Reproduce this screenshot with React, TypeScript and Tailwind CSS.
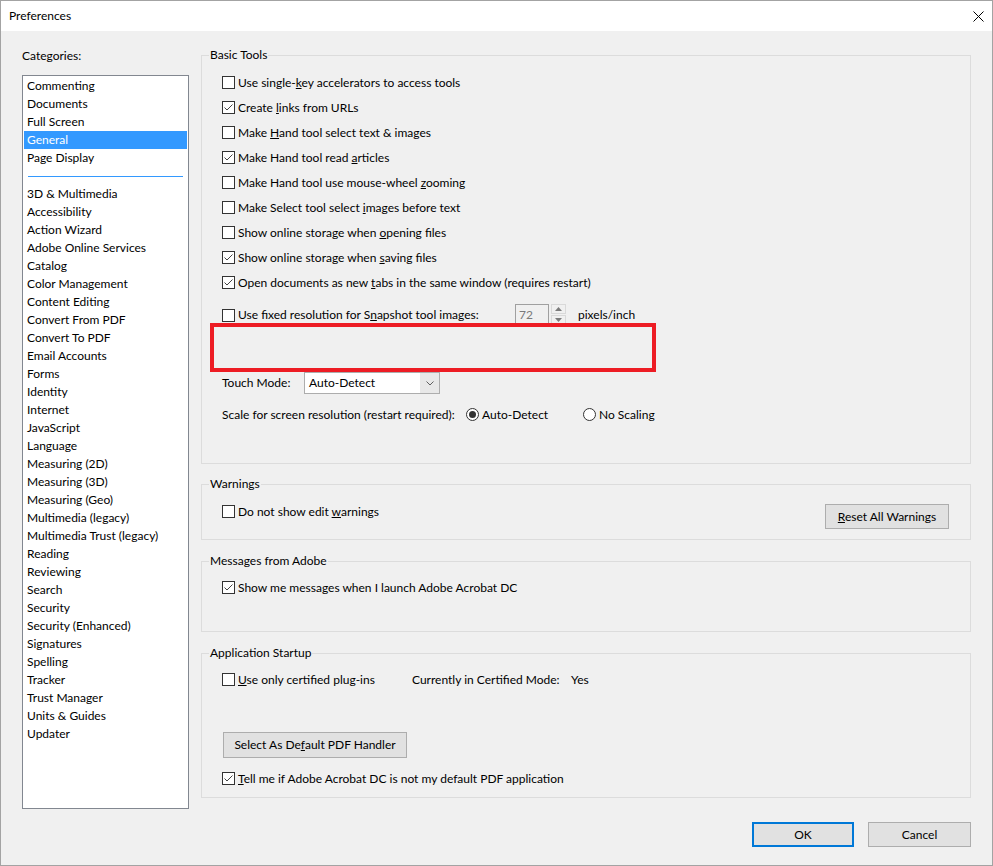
import React from "react";

const topCategories = ["Commenting", "Documents", "Full Screen", "General", "Page Display"];
const moreCategories = [
  "3D & Multimedia",
  "Accessibility",
  "Action Wizard",
  "Adobe Online Services",
  "Catalog",
  "Color Management",
  "Content Editing",
  "Convert From PDF",
  "Convert To PDF",
  "Email Accounts",
  "Forms",
  "Identity",
  "Internet",
  "JavaScript",
  "Language",
  "Measuring (2D)",
  "Measuring (3D)",
  "Measuring (Geo)",
  "Multimedia (legacy)",
  "Multimedia Trust (legacy)",
  "Reading",
  "Reviewing",
  "Search",
  "Security",
  "Security (Enhanced)",
  "Signatures",
  "Spelling",
  "Tracker",
  "Trust Manager",
  "Units & Guides",
  "Updater",
];

function Check({ checked, children }: { checked?: boolean; children: React.ReactNode }) {
  return (
    <div className="flex items-center gap-[3px] whitespace-nowrap">
      <span className="w-[13px] h-[13px] shrink-0 border border-[#333333] bg-white flex items-center justify-center">
        {checked && (
          <svg width="11" height="11" viewBox="0 0 11 11">
            <polyline points="1.5,5.5 4,8 9.5,2.5" fill="none" stroke="#444444" strokeWidth="1" />
          </svg>
        )}
      </span>
      <span>{children}</span>
    </div>
  );
}

function Radio({ checked, children }: { checked?: boolean; children: React.ReactNode }) {
  return (
    <div className="flex items-center gap-[3px] whitespace-nowrap">
      <span className="w-[13px] h-[13px] shrink-0 rounded-full border border-[#333333] bg-white flex items-center justify-center">
        {checked && <span className="w-[7px] h-[7px] rounded-full bg-[#333333]" />}
      </span>
      <span>{children}</span>
    </div>
  );
}

function Group({ title, className, children }: { title: string; className: string; children: React.ReactNode }) {
  return (
    <div className={`relative border border-[#dcdcdc] ${className}`}>
      <span className="absolute left-[7px] -top-[9px] px-[1px] leading-[16px] bg-[#f0f0f0] whitespace-nowrap">
        {title}
      </span>
      {children}
    </div>
  );
}

function Row({ children }: { children: React.ReactNode }) {
  return <div className="h-[25px] flex items-center">{children}</div>;
}

function Button({ className, children }: { className: string; children: React.ReactNode }) {
  return (
    <div className={`bg-[#e1e1e1] flex items-center justify-center whitespace-nowrap ${className}`}>
      {children}
    </div>
  );
}

export default function App() {
  return (
    <div className="w-[993px] h-[866px] border border-[#a3a3a3] bg-[#f0f0f0] flex flex-col text-[12px] leading-[16px] text-black font-[Lato,sans-serif]">
      {/* title bar */}
      <div className="h-[30px] bg-white flex items-center pl-[8px] shrink-0">
        <span>Preferences</span>
        <svg className="ml-auto mr-[8px]" width="11" height="11" viewBox="0 0 11 11">
          <path d="M0.5 0.5 L10.5 10.5 M10.5 0.5 L0.5 10.5" stroke="#000" strokeWidth="1" />
        </svg>
      </div>

      <div className="flex-1 flex flex-col pl-[21px] pr-[20px]">
        <div className="flex">
          {/* categories */}
          <div className="w-[167px] pt-[17px] shrink-0">
            <div>
              Cate<u>g</u>ories:
            </div>
            <div className="mt-[11px] h-[734px] border border-[#828790] bg-white p-[1px]">
              {topCategories.map((c) => (
                <div
                  key={c}
                  className={
                    c === "General"
                      ? "h-[18px] px-[3px] flex items-center bg-[#3399ff] text-white"
                      : "h-[18px] px-[3px] flex items-center"
                  }
                >
                  {c}
                </div>
              ))}
              <div className="h-[18px] flex items-center px-[4px]">
                <div className="h-px w-full bg-[#3399ff]" />
              </div>
              {moreCategories.map((c) => (
                <div key={c} className="h-[18px] px-[3px] flex items-center whitespace-nowrap">
                  {c}
                </div>
              ))}
            </div>
          </div>

          {/* settings */}
          <div className="ml-[12px] w-[770px] pt-[24px]">
            <Group title="Basic Tools" className="h-[409px]">
              <div className="pt-[14px] pl-[20px]">
                <Row>
                  <Check>
                    Use single-<u>k</u>ey accelerators to access tools
                  </Check>
                </Row>
                <Row>
                  <Check checked>
                    Create <u>l</u>inks from URLs
                  </Check>
                </Row>
                <Row>
                  <Check>
                    Make <u>H</u>and tool select text &amp; images
                  </Check>
                </Row>
                <Row>
                  <Check checked>
                    Make Hand tool read <u>a</u>rticles
                  </Check>
                </Row>
                <Row>
                  <Check>
                    Make Hand tool use mouse-wheel <u>z</u>ooming
                  </Check>
                </Row>
                <Row>
                  <Check>
                    Make Select tool select <u>i</u>mages before text
                  </Check>
                </Row>
                <Row>
                  <Check>
                    Show online storage when <u>o</u>pening files
                  </Check>
                </Row>
                <Row>
                  <Check checked>
                    Show online storage when <u>s</u>aving files
                  </Check>
                </Row>
                <Row>
                  <Check checked>
                    Open documents as new <u>t</u>abs in the same window (requires restart)
                  </Check>
                </Row>

                <div className="mt-[9px] h-[22px] flex items-center">
                  <div className="w-[293px]">
                    <Check>
                      Use fixed resolution for S<u>n</u>apshot tool images:
                    </Check>
                  </div>
                  <div className="w-[34px] h-[22px] border border-[#a0a0a0] bg-[#f0f0f0] text-[#7a7a7a] flex items-center pl-[3px]">
                    72
                  </div>
                  <div className="ml-[2px] w-[15px] h-[22px] flex flex-col gap-[1px]">
                    <div className="h-[10px] border border-[#d9d9d9] flex items-center justify-center">
                      <svg width="7" height="4" viewBox="0 0 7 4">
                        <path d="M0 4 L3.5 0 L7 4 Z" fill="#7a7a7a" />
                      </svg>
                    </div>
                    <div className="h-[10px] border border-[#d9d9d9] flex items-center justify-center">
                      <svg width="7" height="4" viewBox="0 0 7 4">
                        <path d="M0 0 L3.5 4 L7 0 Z" fill="#7a7a7a" />
                      </svg>
                    </div>
                  </div>
                  <span className="ml-[12px]">pixels/inch</span>
                </div>

                {/* highlighted area */}
                <div className="relative -mt-[3px] -ml-[12px] w-[446px] h-[49px] border-4 border-[#ed1c24]" />

                <div className="h-[22px] flex items-center">
                  <span className="w-[82px]">Touch Mode:</span>
                  <div className="w-[136px] h-[22px] border border-[#adadad] bg-[#e8e8e8] flex">
                    <div className="w-[115px] bg-white flex items-center pl-[4px]">Auto-Detect</div>
                    <div className="flex-1 flex items-center justify-center">
                      <svg width="8" height="5" viewBox="0 0 8 5">
                        <polyline points="0.5,0.5 4,4 7.5,0.5" fill="none" stroke="#606060" strokeWidth="1" />
                      </svg>
                    </div>
                  </div>
                </div>

                <div className="mt-[10px] h-[21px] flex items-center whitespace-nowrap">
                  <span className="w-[244px]">Scale for screen resolution (restart required):</span>
                  <div className="w-[117px]">
                    <Radio checked>Auto-Detect</Radio>
                  </div>
                  <Radio>No Scaling</Radio>
                </div>
              </div>
            </Group>

            <Group title="Warnings" className="mt-[20px] h-[56px]">
              <div className="pt-[14px] pl-[20px] flex items-start">
                <Row>
                  <Check>
                    Do not show edit <u>w</u>arnings
                  </Check>
                </Row>
                <Button className="ml-auto mr-[21px] mt-[5px] w-[124px] h-[25px] border border-[#adadad]">
                  <span>
                    <u>R</u>eset All Warnings
                  </span>
                </Button>
              </div>
            </Group>

            <Group title="Messages from Adobe" className="mt-[21px] h-[71px]">
              <div className="pt-[13px] pl-[20px]">
                <Row>
                  <Check checked>Show me messages when I launch Adobe Acrobat DC</Check>
                </Row>
              </div>
            </Group>

            <Group title="Application Startup" className="mt-[21px] h-[145px]">
              <div className="pt-[13px] pl-[20px]">
                <Row>
                  <div className="w-[190px]">
                    <Check>
                      <u>U</u>se only certified plug-ins
                    </Check>
                  </div>
                  <span className="w-[159px] whitespace-nowrap">Currently in Certified Mode:</span>
                  <span>Yes</span>
                </Row>
                <Button className="mt-[40px] ml-[1px] w-[184px] h-[26px] border border-[#adadad]">
                  <span>
                    Select As De<u>f</u>ault PDF Handler
                  </span>
                </Button>
                <div className="mt-[8px]">
                  <Row>
                    <Check checked>
                      <u>T</u>ell me if Adobe Acrobat DC is not my default PDF application
                    </Check>
                  </Row>
                </div>
              </div>
            </Group>
          </div>
        </div>

        {/* footer buttons */}
        <div className="mt-[13px] pr-[1px] flex justify-end gap-[14px]">
          <Button className="w-[102px] h-[25px] border-2 border-[#0078d7]">OK</Button>
          <Button className="w-[103px] h-[25px] border border-[#adadad]">Cancel</Button>
        </div>
      </div>
    </div>
  );
}
